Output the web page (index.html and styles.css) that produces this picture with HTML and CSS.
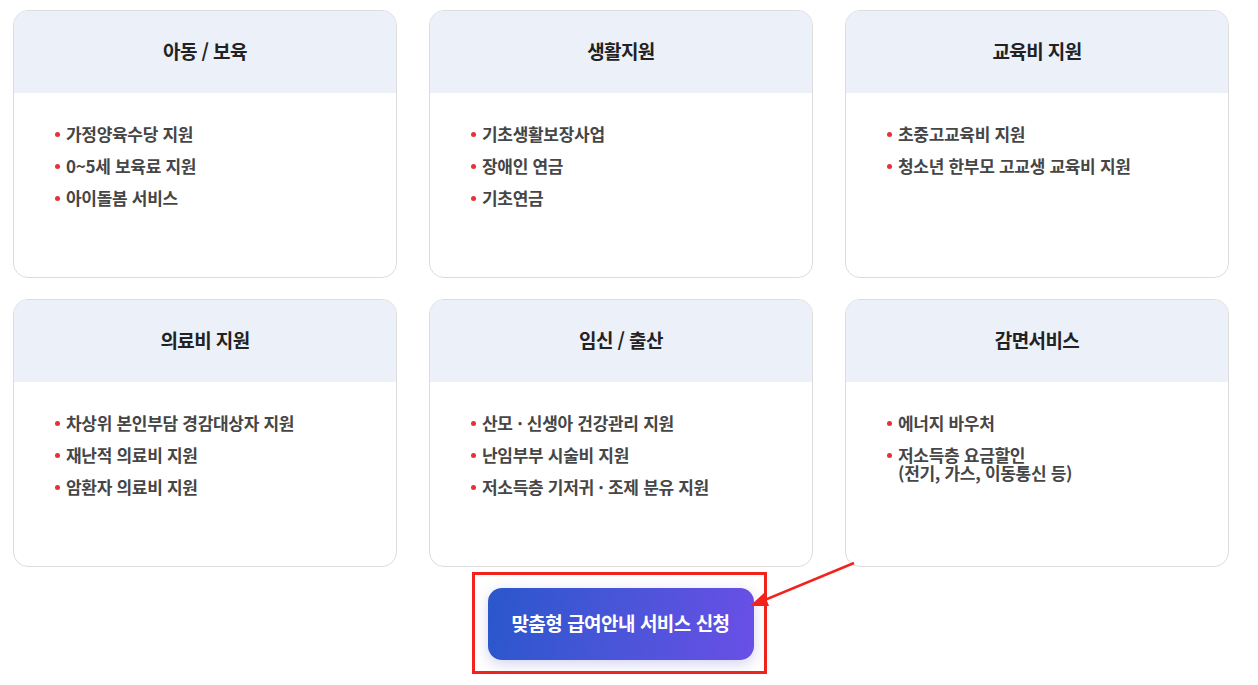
FILE: index.html
```html
<!DOCTYPE html>
<html lang="ko">
<head>
  <meta charset="UTF-8">
  <title>맞춤형 급여안내</title>
  <link rel="stylesheet" href="styles.css">
</head>
<body>
  <div class="page">
    <div class="cards">
      <div class="card">
        <h3 class="card-title">아동 / 보육</h3>
        <ul class="card-list">
          <li>가정양육수당 지원</li>
          <li>0~5세 보육료 지원</li>
          <li>아이돌봄 서비스</li>
        </ul>
      </div>
      <div class="card">
        <h3 class="card-title">생활지원</h3>
        <ul class="card-list">
          <li>기초생활보장사업</li>
          <li>장애인 연금</li>
          <li>기초연금</li>
        </ul>
      </div>
      <div class="card">
        <h3 class="card-title">교육비 지원</h3>
        <ul class="card-list">
          <li>초중고교육비 지원</li>
          <li>청소년 한부모 고교생 교육비 지원</li>
        </ul>
      </div>
      <div class="card">
        <h3 class="card-title">의료비 지원</h3>
        <ul class="card-list">
          <li>차상위 본인부담 경감대상자 지원</li>
          <li>재난적 의료비 지원</li>
          <li>암환자 의료비 지원</li>
        </ul>
      </div>
      <div class="card">
        <h3 class="card-title">임신 / 출산</h3>
        <ul class="card-list">
          <li>산모 · 신생아 건강관리 지원</li>
          <li>난임부부 시술비 지원</li>
          <li>저소득층 기저귀 · 조제 분유 지원</li>
        </ul>
      </div>
      <div class="card">
        <h3 class="card-title">감면서비스</h3>
        <ul class="card-list">
          <li>에너지 바우처</li>
          <li><span class="line">저소득층 요금할인</span><span class="line">(전기, 가스, 이동통신 등)</span></li>
        </ul>
      </div>
    </div>

    <div class="apply">
      <div class="apply-box">
        <button class="apply-btn" type="button">맞춤형 급여안내 서비스 신청</button>
      </div>
    </div>

    <svg class="arrow" width="120" height="60" viewBox="0 0 120 60">
      <line x1="112" y1="3" x2="18" y2="42" stroke="#f2231c" stroke-width="2.5"/>
      <polygon points="8,46 22,33 27,46" fill="#f2231c"/>
    </svg>
  </div>
</body>
</html>
```

FILE: styles.css
```css
html { font-size: 16px; }
body { margin: 0; background: #fff; font-family: "Noto Sans CJK KR", "Noto Sans", sans-serif; color: #333; }
.page { position: relative; width: 1258px; height: 685px; padding: 10px 0 0 13px; box-sizing: border-box; }
.cards { display: grid; grid-template-columns: repeat(3, 384px); column-gap: 32px; row-gap: 21px; }
.card { height: 268px; box-sizing: border-box; border: 1px solid #dcdcdc; border-radius: 15px; overflow: hidden; background: #fff; }
.card-title { margin: 0; height: 82px; padding-bottom: 4px; box-sizing: border-box; display: flex; align-items: center; justify-content: center; background: #ecf0f9; font-size: 19px; font-weight: 700; color: #222; letter-spacing: -0.6px; }
.card-list { list-style: none; margin: 0; padding: 32px 0 0 41px; }
.card-list li { position: relative; padding-left: 11px; font-size: 17px; line-height: 18px; font-weight: 700; color: #464646; letter-spacing: -0.3px; margin-bottom: 14px; }
.card-list li::before { content: ""; position: absolute; left: 0; top: 7px; width: 5px; height: 5px; border-radius: 50%; background: #e8303a; }
.card-list .line { display: block; height: 18px; }
.apply { display: flex; justify-content: center; margin-top: 5px; padding-right: 33px; }
.apply-box { border: 3px solid #f2231c; padding: 13px 10px 11px 13px; background: #fff; }
.apply-btn { display: block; width: 266px; height: 72px; padding: 0 0 3px; border: 0; border-radius: 14px; background: linear-gradient(100deg, #2a57cb 0%, #4a55d9 50%, #6a4fe6 100%); color: #fff; font-family: inherit; font-size: 19px; font-weight: 700; letter-spacing: -0.5px; box-shadow: 0 4px 14px rgba(80, 80, 200, 0.25); cursor: pointer; }
.arrow { position: absolute; left: 742px; top: 560px; }
```
